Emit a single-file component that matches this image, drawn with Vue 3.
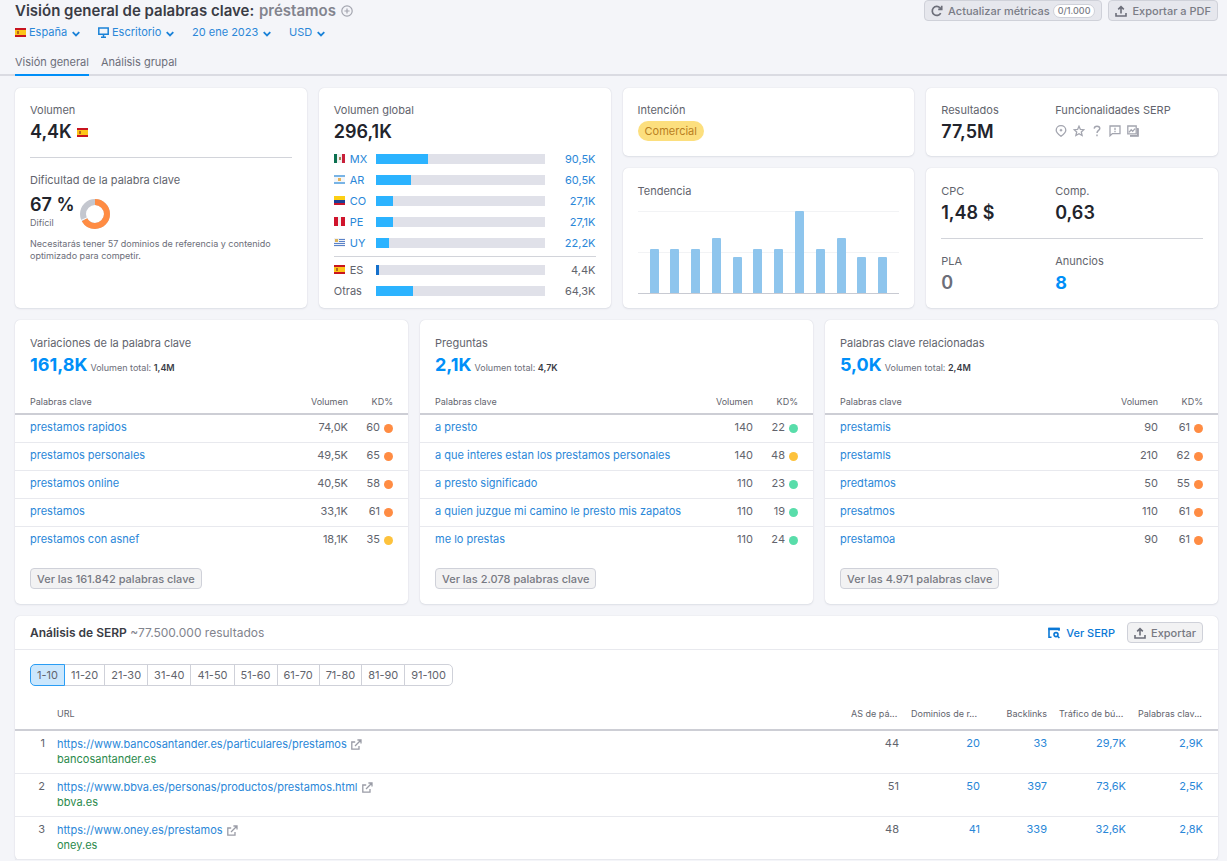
<script setup>
import { ref, h } from 'vue'

const Flag = (props) => {
  const art = {
    es: [['#c8141e', 0, 0, 11, 9], ['#fcc419', 0, 2, 11, 5], ['#b5651d', 2, 3, 2, 3]],
    mx: [['#f1f1f1', 0, 0, 11, 9], ['#0b7050', 0, 0, 3, 9], ['#c8203a', 8, 0, 3, 9], ['#9a8555', 5, 3, 2, 3]],
    ar: [['#f4f6f8', 0, 0, 11, 9], ['#78b4e6', 0, 0, 11, 2], ['#78b4e6', 0, 7, 11, 2], ['#e8b45a', 4, 3, 3, 3]],
    co: [['#fccf14', 0, 0, 11, 9], ['#1c3f94', 0, 4, 11, 3], ['#c8142c', 0, 7, 11, 2]],
    pe: [['#f4f4f4', 0, 0, 11, 9], ['#d0142c', 0, 0, 4, 9], ['#d0142c', 7, 0, 4, 9]],
    uy: [['#eef1f6', 0, 0, 11, 9], ['#5a82c8', 5, 1, 6, 1], ['#5a82c8', 5, 3, 6, 1], ['#5a82c8', 0, 5, 11, 1], ['#5a82c8', 0, 7, 11, 1], ['#dcb45a', 1, 1, 3, 3]],
  }
  return h(
    'svg',
    { width: 11, height: 9, viewBox: '0 0 11 9', 'aria-hidden': true },
    art[props.code].map(([fill, x, y, width, height]) => h('rect', { fill, x, y, width, height }))
  )
}
Flag.props = ['code']

const filters = [
  { label: 'País', value: 'España', icon: 'flag' },
  { label: 'Dispositivo', value: 'Escritorio', icon: 'desktop' },
  { label: 'Fecha', value: '20 ene 2023' },
  { label: 'Moneda', value: 'USD' },
]

const countries = [
  { code: 'mx', name: 'MX', value: '90,5K', share: 31 },
  { code: 'ar', name: 'AR', value: '60,5K', share: 21 },
  { code: 'co', name: 'CO', value: '27,1K', share: 10 },
  { code: 'pe', name: 'PE', value: '27,1K', share: 10 },
  { code: 'uy', name: 'UY', value: '22,2K', share: 8 },
]
const rest = [
  { code: 'es', name: 'ES', value: '4,4K', share: 2, own: true },
  { name: 'Otras', value: '64,3K', share: 22 },
]

const trend = [54, 54, 54, 67, 44, 54, 54, 100, 54, 67, 44, 44]

const lists = [
  {
    title: 'Variaciones de la palabra clave', total: '161,8K', volume: '1,4M', more: 'Ver las 161.842 palabras clave',
    rows: [
      ['prestamos rapidos', '74,0K', 60, 'hard'],
      ['prestamos personales', '49,5K', 65, 'hard'],
      ['prestamos online', '40,5K', 58, 'hard'],
      ['prestamos', '33,1K', 61, 'hard'],
      ['prestamos con asnef', '18,1K', 35, 'medium'],
    ],
  },
  {
    title: 'Preguntas', total: '2,1K', volume: '4,7K', more: 'Ver las 2.078 palabras clave',
    rows: [
      ['a presto', '140', 22, 'easy'],
      ['a que interes estan los prestamos personales', '140', 48, 'medium'],
      ['a presto significado', '110', 23, 'easy'],
      ['a quien juzgue mi camino le presto mis zapatos', '110', 19, 'easy'],
      ['me lo prestas', '110', 24, 'easy'],
    ],
  },
  {
    title: 'Palabras clave relacionadas', total: '5,0K', volume: '2,4M', more: 'Ver las 4.971 palabras clave',
    rows: [
      ['prestamis', '90', 61, 'hard'],
      ['prestamls', '210', 62, 'hard'],
      ['predtamos', '50', 55, 'hard'],
      ['presatmos', '110', 61, 'hard'],
      ['prestamoa', '90', 61, 'hard'],
    ],
  },
]

const pages = ['1-10', '11-20', '21-30', '31-40', '41-50', '51-60', '61-70', '71-80', '81-90', '91-100']
const page = ref('1-10')

const results = [
  { url: 'https://www.bancosantander.es/particulares/prestamos', domain: 'bancosantander.es', score: '44', nums: ['20', '33', '29,7K', '2,9K'] },
  { url: 'https://www.bbva.es/personas/productos/prestamos.html', domain: 'bbva.es', score: '51', nums: ['50', '397', '73,6K', '2,5K'] },
  { url: 'https://www.oney.es/prestamos', domain: 'oney.es', score: '48', nums: ['41', '339', '32,6K', '2,8K'] },
]
</script>

<template>
  <div class="page">
    <header class="top">
      <div class="heading">
        <h1>Visión general de palabras clave: <span>préstamos</span></h1>
        <button class="plain" aria-label="Añadir a la lista">
          <svg width="12" height="12" viewBox="0 0 12 12" fill="none" stroke="#a3a5af" stroke-width="1.2"><circle cx="6" cy="6" r="5.2" /><path d="M6 3.4v5.2M3.4 6h5.2" /></svg>
        </button>
      </div>
      <div class="actions">
        <button class="btn">
          <svg width="12" height="12" viewBox="0 0 12 12" fill="none" stroke="#6c6e79" stroke-width="1.7"><path d="M9.7 8.2A4.5 4.5 0 1 1 9 2.8L10 4" /><path d="M10.7 0.8v3.6H7.2" /></svg>
          Actualizar métricas <span class="count">0/1.000</span>
        </button>
        <button class="btn">
          <svg width="12" height="12" viewBox="0 0 12 12" fill="none" stroke="#6c6e79" stroke-width="1.6"><path d="M6 8.4V1.8M3.2 4.4 6 1.6l2.8 2.8M1 8v3h10V8" /></svg>
          Exportar a PDF
        </button>
      </div>
    </header>

    <div class="filters">
      <label v-for="f in filters" :key="f.label" class="filter">
        <Flag v-if="f.icon === 'flag'" code="es" />
        <svg v-if="f.icon === 'desktop'" width="11" height="11" viewBox="0 0 11 11" fill="none" stroke="#1a82d8" stroke-width="1.5"><path d="M.8 1h9.400v6.200H.8zM5.500 7.200v2.600M3 10.200h5" /></svg>
        <select :aria-label="f.label"><option>{{ f.value }}</option></select>
        <svg class="chev" width="8" height="6" viewBox="0 0 8 6" fill="none" stroke="#1a82d8" stroke-width="1.8"><path d="m.7 1.200 3.300 3.200 3.300-3.200" /></svg>
      </label>
    </div>

    <nav class="tabs">
      <a href="#" class="on" aria-current="page">Visión general</a>
      <a href="#">Análisis grupal</a>
    </nav>

    <main>
      <div class="metrics">
        <section class="card tall">
          <h2>Volumen</h2>
          <p class="big">4,4K <Flag code="es" /></p>
          <hr class="rule" />
          <h2>Dificultad de la palabra clave</h2>
          <div class="kd">
            <div>
              <p class="big">67 %</p>
              <p class="tiny">Difícil</p>
            </div>
            <svg width="30" height="30" viewBox="0 0 30 30" fill="none" stroke-width="6" aria-hidden="true">
              <circle cx="15" cy="15" r="12" stroke="#c4c7cf" />
              <circle cx="15" cy="15" r="12" stroke="#ff8c43" pathLength="100" stroke-dasharray="67 33" transform="rotate(-90 15 15)" />
              <path d="M1 21.500 9.500 17.600" stroke="#fff" stroke-width="1" />
            </svg>
          </div>
          <p class="tiny note">Necesitarás tener 57 dominios de referencia y contenido optimizado para competir.</p>
        </section>

        <section class="card tall">
          <h2>Volumen global</h2>
          <p class="big">296,1K</p>
          <ul class="geo">
            <li v-for="c in countries" :key="c.name">
              <span class="place"><Flag :code="c.code" /><a href="#">{{ c.name }}</a></span>
              <span class="track"><span class="fill" :style="{ width: c.share + '%' }"></span></span>
              <a href="#" class="num">{{ c.value }}</a>
            </li>
          </ul>
          <ul class="geo other">
            <li v-for="c in rest" :key="c.name">
              <span class="place"><Flag v-if="c.code" :code="c.code" />{{ c.name }}</span>
              <span class="track"><span class="fill" :class="{ own: c.own }" :style="{ width: c.share + '%' }"></span></span>
              <span class="num">{{ c.value }}</span>
            </li>
          </ul>
        </section>

        <section class="card">
          <h2>Intención</h2>
          <span class="intent">Comercial</span>
        </section>

        <section class="card pair">
          <div>
            <h2>Resultados</h2>
            <p class="big">77,5M</p>
          </div>
          <div>
            <h2>Funcionalidades SERP</h2>
            <div class="features">
              <svg width="12" height="12" viewBox="0 0 12 12" fill="none" stroke="#a3a5af" stroke-width="1.3"><path d="M6 11.3C3.4 9.3 1.2 7.500 1.2 5.200a4.800 4.500 0 0 1 9.600 0C10.800 7.500 8.600 9.300 6 11.300z" /><circle cx="6" cy="5.200" r="1" fill="#a3a5af" stroke-width=".6" /></svg>
              <svg width="12" height="12" viewBox="0 0 12 12" fill="none" stroke="#a3a5af" stroke-width="1.3"><path d="m6 1.200 1.400 3.200 3.500.3-2.600 2.300.8 3.500L6 8.700l-3.100 1.800.8-3.500L1.100 4.700l3.500-.3z" /></svg>
              <svg width="12" height="12" viewBox="0 0 12 12" fill="none" stroke="#a3a5af" stroke-width="1.400"><path d="M3.200 3.600C3.300 2 4.400 1.300 6 1.300s2.800.9 2.800 2.300C8.800 5.400 6 5.500 6 8M6 9.600v1.600" /></svg>
              <svg width="12" height="12" viewBox="0 0 12 12" fill="none" stroke="#a3a5af" stroke-width="1.300"><path d="M1 10.800V1h10v7.600H3.400zM6 2.800v2.400M6 6v1.200" /></svg>
              <svg width="12" height="12" viewBox="0 0 12 12" fill="none" stroke="#a3a5af" stroke-width="1.300"><path d="M.8 1h8.400v7.800H.8zM2 7.400l2.200-2.600 1.500 1.500L8 3.600M11.200 3.200v8H3" /><path d="M10.600 3v7.600H3" /></svg>
            </div>
          </div>
        </section>

        <section class="card lower">
          <h2>Tendencia</h2>
          <div class="chart" role="img" aria-label="Tendencia de los últimos 12 meses">
            <span v-for="(v, i) in trend" :key="i" class="bar" :style="{ height: v + '%' }"></span>
          </div>
        </section>

        <section class="card lower">
          <div class="pair">
            <div><h2>CPC</h2><p class="big">1,48 $</p></div>
            <div><h2>Comp.</h2><p class="big">0,63</p></div>
          </div>
          <hr class="rule" />
          <div class="pair">
            <div><h2>PLA</h2><p class="big muted">0</p></div>
            <div><h2>Anuncios</h2><p class="big"><a href="#" class="bright">8</a></p></div>
          </div>
        </section>
      </div>

      <div class="lists">
        <section v-for="l in lists" :key="l.title" class="card list">
          <h2>{{ l.title }}</h2>
          <p class="sum"><a href="#" class="big bright">{{ l.total }}</a> <span class="tiny">Volumen total: <b>{{ l.volume }}</b></span></p>
          <table>
            <thead>
              <tr><th scope="col">Palabras clave</th><th scope="col" class="vol">Volumen</th><th scope="col" class="diff">KD%</th></tr>
            </thead>
            <tbody>
              <tr v-for="r in l.rows" :key="r[0]">
                <td><a href="#">{{ r[0] }}</a></td>
                <td class="vol">{{ r[1] }}</td>
                <td class="diff">{{ r[2] }}<i class="dot" :class="r[3]"></i></td>
              </tr>
            </tbody>
          </table>
          <button class="btn light">{{ l.more }}</button>
        </section>
      </div>

      <section class="card serp">
        <div class="serp-head">
          <h2><b>Análisis de SERP</b> ~77.500.000 resultados</h2>
          <a href="#" class="view">
            <svg width="12" height="12" viewBox="0 0 12 12" fill="none" stroke="#0a78d6" stroke-width="1.600"><path d="M3.500 10.200H1V1.500h10v2.300" /><path d="M.4 2h11.200" stroke-width="2.400" /><circle cx="8" cy="7.600" r="2" /><path d="m9.400 9 2 2" /></svg>
            Ver SERP
          </a>
          <button class="btn light">
            <svg width="12" height="12" viewBox="0 0 12 12" fill="none" stroke="#6c6e79" stroke-width="1.600"><path d="M6 8.400V1.800M3.200 4.400 6 1.600l2.800 2.800M1 8v3h10V8" /></svg>
            Exportar
          </button>
        </div>
        <div class="pager" role="group" aria-label="Posiciones">
          <button v-for="p in pages" :key="p" :class="{ on: p === page }" :aria-pressed="p === page" @click="page = p">{{ p }}</button>
        </div>
        <table class="results">
          <colgroup><col class="c-pos" /><col /><col class="c-as" /><col class="c-dom" /><col class="c-back" /><col class="c-traf" /><col class="c-kw" /></colgroup>
          <thead>
            <tr>
              <th></th>
              <th scope="col">URL</th>
              <th scope="col">AS de pá...</th>
              <th scope="col">Dominios de r...</th>
              <th scope="col" class="right">Backlinks</th>
              <th scope="col">Tráfico de bú...</th>
              <th scope="col">Palabras clav...</th>
            </tr>
          </thead>
          <tbody>
            <tr v-for="(r, i) in results" :key="r.url">
              <td class="right">{{ i + 1 }}</td>
              <td>
                <div class="url">
                  <a href="#">{{ r.url }}</a>
                  <svg width="11" height="11" viewBox="0 0 11 11" fill="none" stroke="#9a9ca6" stroke-width="1.300"><path d="M4.200 3H.8v7.200H8V7M6.400 1h3.600v3.600M10 1 4 7" /></svg>
                </div>
                <div class="domain">{{ r.domain }}</div>
              </td>
              <td class="right">{{ r.score }}</td>
              <td v-for="(n, k) in r.nums" :key="k" class="right"><a href="#">{{ n }}</a></td>
            </tr>
          </tbody>
        </table>
      </section>
    </main>
  </div>
</template>

<style>
body { background: #f4f5f9; }
</style>

<style scoped>
.page { font: 11px/16px Inter, "Liberation Sans", sans-serif; color: #62646d; }
h1, h2, p, ul { margin: 0; padding: 0; font-weight: 400; }
h2 { font-size: 11px; line-height: 16px; }
ul { list-style: none; }
svg { display: block; flex: none; }
a { color: #2a87d8; text-decoration: none; }
button, select { font: inherit; color: inherit; cursor: pointer; }
table { width: 100%; border-collapse: collapse; }
th, td { padding: 0; font-weight: 400; text-align: left; }
th { font-size: 9px; }

.top { display: flex; justify-content: space-between; align-items: flex-start; padding: 0 9px 0 15px; }
.heading { display: flex; align-items: center; gap: 5px; height: 22px; }
h1 { font-size: 15px; line-height: 20px; font-weight: 600; color: #3a3c45; }
h1 span { margin-left: 1px; color: #82848e; }
.plain { padding: 0; border: 0; background: none; }
.actions { display: flex; gap: 6px; }
.btn { display: inline-flex; align-items: center; gap: 5px; height: 21px; padding: 0 6px; border: 1px solid #cfd1d9; border-radius: 4px; background: #e6e7ed; color: #7a7c86; font-weight: 500; }
.btn.light { background: #f2f2f3; color: #777982; }
.count { margin-left: -2px; padding: 0 4px; border: 1px solid #cfd1d9; border-radius: 8px; background: #fff; font-size: 9px; line-height: 12px; }

.filters { display: flex; gap: 18px; height: 20px; padding: 0 15px; }
.filter { display: flex; align-items: center; gap: 3px; }
.filter select { appearance: none; padding: 0; border: 0; background: none; color: #2a87d8; }
.chev { margin: 3px 0 0 1px; }

.tabs { display: flex; gap: 12px; margin-top: 8px; padding: 0 15px; border-bottom: 2px solid #dadbe2; }
.tabs a { padding: 4px 0; margin-bottom: -2px; border-bottom: 2px solid transparent; color: #6c6e79; }
.tabs .on { border-color: #008ff8; }

main { display: grid; gap: 12px; padding: 12px 9px 0 15px; }
.card { min-width: 0; padding: 14px 15px 13px; border-radius: 5px; background: #fff; box-shadow: 0 0 1px #c8cad4, 0 1px 2px #dfe1e8; }
.card.lower { padding: 15px 15px 12px; }
.big { font-size: 18px; line-height: 24px; margin-top: 2px; font-weight: 600; color: #22242c; }
.bright { color: #008ff8; font-weight: 700; }
.muted { color: #6c6e79; }
.tiny { font-size: 9px; line-height: 12px; color: #6c6e79; }
.rule { margin: 13px 0 14px; border: 0; border-top: 1px solid #d2d4da; }

.metrics { display: grid; grid-template-columns: repeat(4, minmax(0, 1fr)); grid-template-rows: 68px 140px; gap: 12px; }
.tall { grid-row: span 2; }
.tall .big { display: flex; align-items: center; gap: 5px; }
.kd { display: flex; align-items: flex-end; gap: 5px; margin-top: 3px; }
.kd .big { margin: 2px 0 0; }
.note { margin-top: 9px; }

.geo { margin-top: 4px; }
.geo li { display: grid; grid-template-columns: 42px 1fr 51px; align-items: center; height: 21px; }
.geo.other { margin-top: 3px; padding-top: 2px; border-top: 1px solid #d2d4da; }
.place { display: flex; align-items: center; gap: 5px; }
.track { height: 10px; background: #e0e1e9; }
.fill { display: block; height: 100%; background: #2bb3ff; }
.fill.own { background: #1470cc; }
.num { text-align: right; }

.intent { display: inline-block; margin-top: 3px; padding: 2px 7px; border-radius: 10px; background: #fcdf7e; color: #b98022; }
.pair { display: grid; grid-template-columns: 114px 1fr; align-content: start; }
.features { display: flex; gap: 6px; margin-top: 7px; }
.chart { display: flex; align-items: flex-end; justify-content: space-between; height: 82px; margin-top: 12px; padding: 0 12px; border-bottom: 1px solid #c8cad2; background: linear-gradient(#f2f3f5, #f2f3f5) 0 0 / 100% 1px no-repeat, linear-gradient(#f2f3f5, #f2f3f5) 0 50% / 100% 1px no-repeat; }
.bar { width: 9px; border-radius: 1px 1px 0 0; background: #8ec5ed; }

.lists { display: grid; grid-template-columns: repeat(3, minmax(0, 1fr)); gap: 12px; }
.list { padding: 15px 0; }
.list h2, .sum { padding: 0 15px; }
.sum { height: 24px; margin-top: 2px; line-height: 24px; }
.sum b { color: #3a3c45; font-weight: 600; }
.list th { padding: 17px 0 3px; border-bottom: 2px solid #cdced5; }
.list td { height: 24px; padding-bottom: 3px; border-bottom: 1px solid #e8e9ee; }
.list tbody tr:last-child td { border-bottom: 0; }
.list th:first-child, .list td:first-child { padding-left: 15px; }
.list .vol { width: 60px; text-align: right; }
.list .diff { width: 45px; padding-right: 15px; text-align: right; }
.dot { display: inline-block; width: 9px; height: 9px; margin-left: 4px; border-radius: 50%; vertical-align: -2px; }
.hard { background: #ff8c43; }
.medium { background: #fdc23c; }
.easy { background: #59ddaa; }
.list .btn { margin: 14px 15px 0; }

.serp { padding: 0; }
.serp-head { display: flex; align-items: center; height: 33px; padding: 0 15px; border-bottom: 1px solid #e8e9ee; }
.serp-head h2 { flex: 1; font-size: 12px; color: #82848e; }
.serp-head b { font-weight: 600; color: #3a3c45; }
.view { display: flex; align-items: center; gap: 6px; margin-right: 12px; color: #0a78d6; font-weight: 500; }
.pager { display: flex; padding: 14px 15px 0; }
.pager button { height: 22px; padding: 0 6px; margin-left: -1px; border: 1px solid #cfd1d9; background: #fff; }
.pager button:first-child { margin-left: 0; border-radius: 5px 0 0 5px; }
.pager button:last-child { border-radius: 0 5px 5px 0; }
.pager .on { position: relative; border-color: #2a9df4; background: #cbe7fd; }
.results { table-layout: fixed; }
.results th { padding: 20px 0 7px 12px; border-bottom: 2px solid #cdced5; white-space: nowrap; }
.results td { height: 37px; padding: 5px 0 0 12px; border-bottom: 1px solid #e8e9ee; vertical-align: top; line-height: 15px; }
.results .right { text-align: right; }
.results tr > :last-child { padding-right: 15px; }
.c-pos { width: 30px; }
.c-as { width: 60px; }
.c-dom { width: 81px; }
.c-back { width: 67px; }
.c-traf { width: 79px; }
.c-kw { width: 92px; }
.url { display: flex; align-items: center; gap: 4px; padding-top: 1px; }
.domain { color: #2a8a4c; }
</style>
